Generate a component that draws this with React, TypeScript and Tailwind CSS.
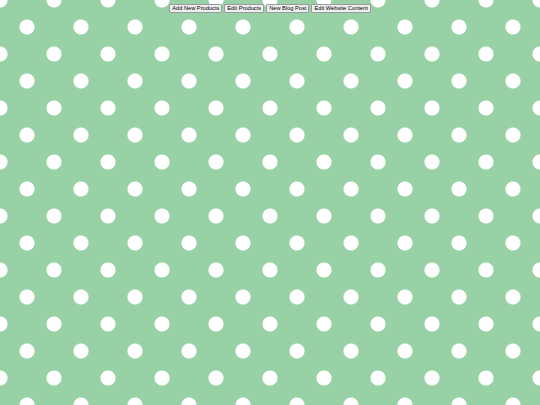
export default function App() {
  const buttons = ["Add New Products", "Edit Products", "New Blog Post", "Edit Website Content"];
  return (
    <div className="w-[540px] h-[405px] overflow-hidden bg-[#99d1a6] bg-[radial-gradient(circle,#ffffff_7px,transparent_8px),radial-gradient(circle,#ffffff_7px,transparent_8px)] bg-[length:54px_54px] bg-[position:0_0,27px_27px]">
      <div className="flex justify-center gap-[2px] pt-[4px]" style={{ fontFamily: '"Liberation Sans", Arial, sans-serif' }}>
        {buttons.map((b) => (
          <button
            key={b}
            className="h-[9px] px-[2px] text-[5.7px] leading-[7px] text-[#000] bg-[#efefef] border border-[#9a9a9a] rounded-[1px]"
          >
            {b}
          </button>
        ))}
      </div>
    </div>
  );
}
